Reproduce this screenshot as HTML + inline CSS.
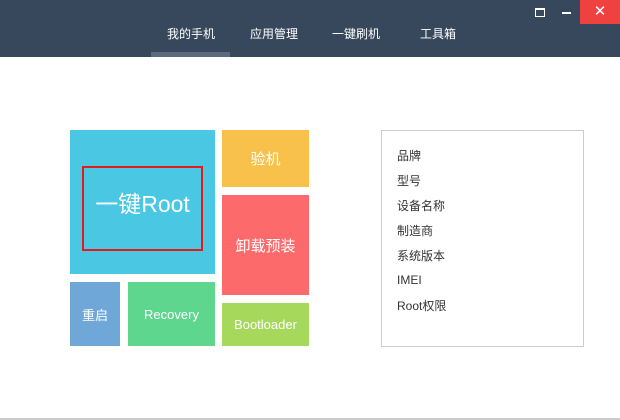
<!DOCTYPE html><html><head><meta charset="utf-8"><style>
body{margin:0;width:620px;height:420px;background:#fff;position:relative;overflow:hidden;font-family:"Liberation Sans","Noto Sans CJK SC",sans-serif}
.a{position:absolute}
.hd{left:0;top:0;width:620px;height:57px;background:#37475c}
.tab{top:25px;color:#fff;font-size:12px}
.t{position:absolute;color:#fff;display:flex;align-items:center;justify-content:center}
.info{left:381px;top:130px;width:201px;height:215px;border:1px solid #ccc}
.info div{position:absolute;left:15px;font-size:12px;color:#333}
</style></head><body>
<div class="a hd"></div>
<div class="a" style="left:151px;top:52px;width:79px;height:5px;background:#5b6b7c"></div>
<div class="a tab" style="left:167px">我的手机</div>
<div class="a tab" style="left:250px">应用管理</div>
<div class="a tab" style="left:332px">一键刷机</div>
<div class="a tab" style="left:420px">工具箱</div>
<div class="a" style="left:580px;top:0;width:40px;height:24px;background:#f04141;color:#fff;font-size:15px;text-align:center;line-height:23px">✕</div>
<div class="a" style="left:535px;top:8px;width:8px;height:6px;border:1px solid #fff;border-top-width:2px"></div>
<div class="a" style="left:562px;top:12px;width:9px;height:2px;background:#fff"></div>
<div class="t" style="left:70px;top:130px;width:145px;height:144px;background:#4ac8e3;font-size:23px">一键Root</div>
<div class="a" style="left:82px;top:166px;width:117px;height:81px;border:2px solid #e21b1b"></div>
<div class="t" style="left:222px;top:130px;width:87px;height:57px;background:#f8c14b;font-size:15px">验机</div>
<div class="t" style="left:222px;top:195px;width:87px;height:100px;background:#fd6a6b;font-size:15px">卸载预装</div>
<div class="t" style="left:70px;top:282px;width:50px;height:64px;background:#6fa8d8;font-size:13px">重启</div>
<div class="t" style="left:128px;top:282px;width:87px;height:64px;background:#5fd68d;font-size:13px">Recovery</div>
<div class="t" style="left:222px;top:303px;width:87px;height:43px;background:#a6d95b;font-size:13px">Bootloader</div>
<div class="a info">
<div style="top:16px">品牌</div><div style="top:41px">型号</div><div style="top:66px">设备名称</div><div style="top:91px">制造商</div><div style="top:116px">系统版本</div><div style="top:142px">IMEI</div><div style="top:166px">Root权限</div>
</div>
<div class="a" style="left:0;top:418px;width:620px;height:2px;background:#ccc"></div>
</body></html>
